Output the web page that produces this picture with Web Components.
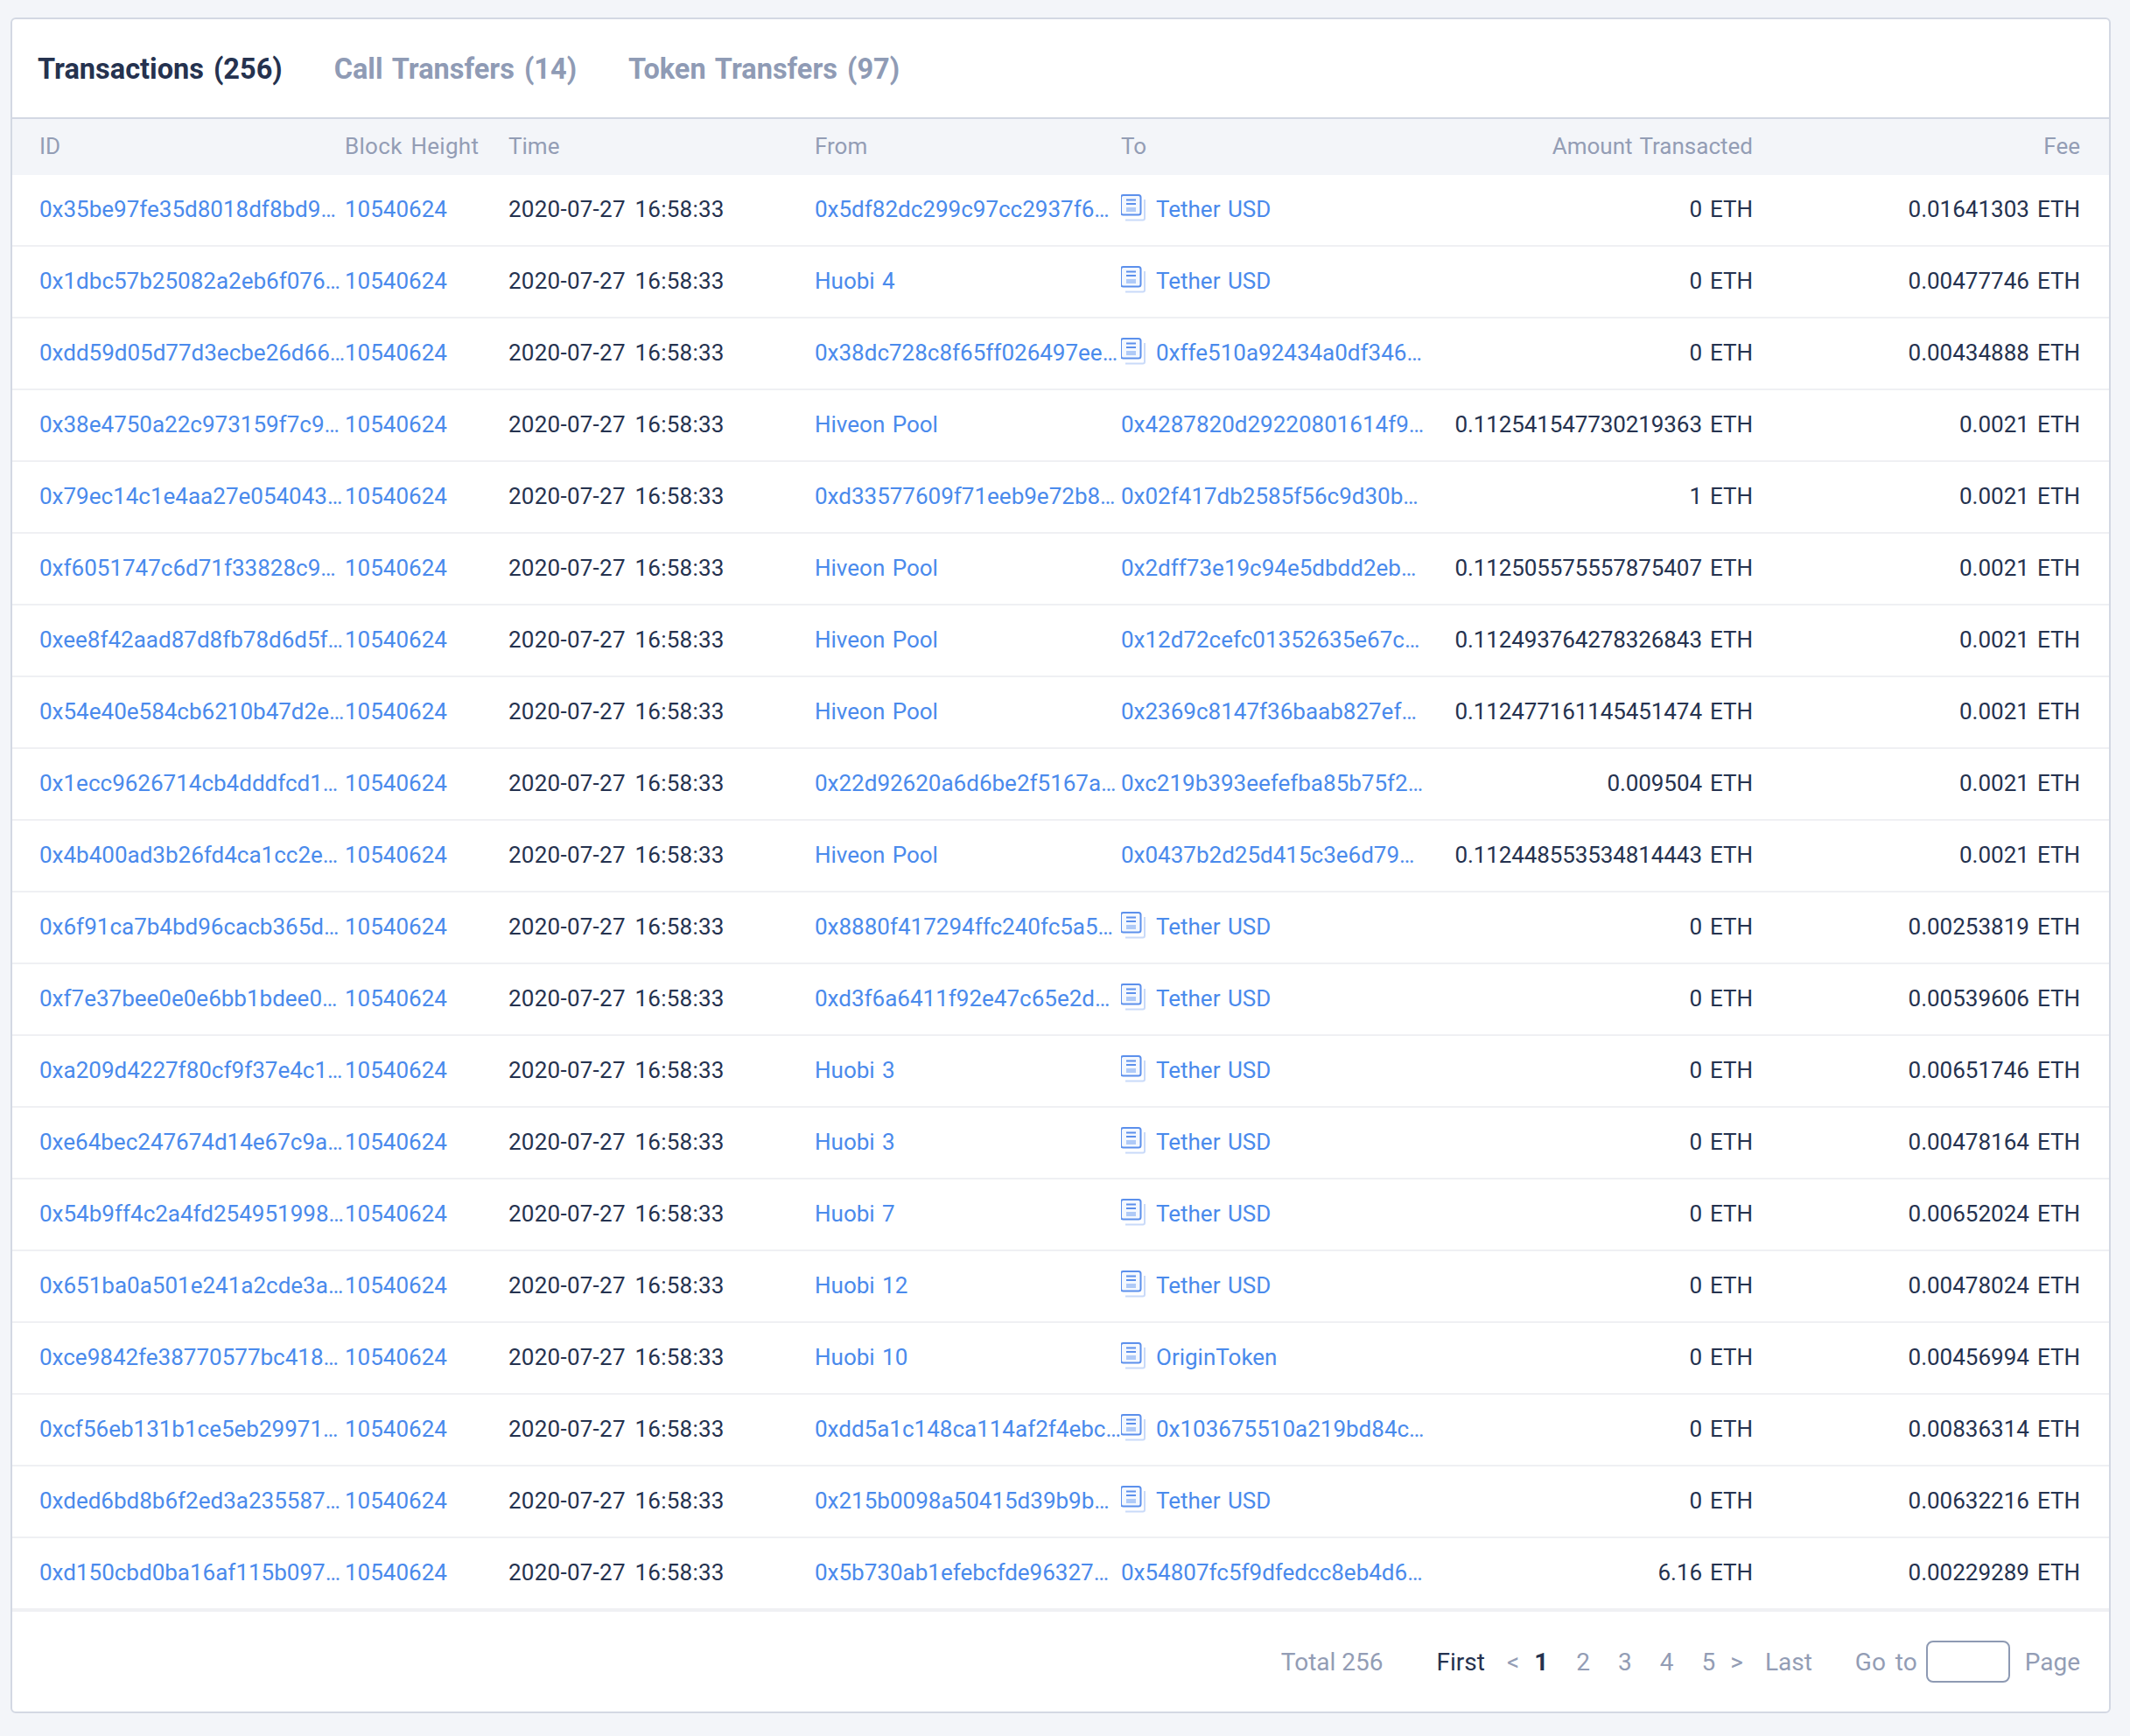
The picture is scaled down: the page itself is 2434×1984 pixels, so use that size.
<!DOCTYPE html>
<html>
<head>
<meta charset="utf-8">
<title>Transactions</title>
<style>
  html, body { margin: 0; background: #f3f5f9; }
</style>
</head>
<body>
<tx-card>
  <tx-tabs slot="tabs">
    <tx-tab active>Transactions (256)</tx-tab>
    <tx-tab>Call Transfers (14)</tx-tab>
    <tx-tab>Token Transfers (97)</tx-tab>
  </tx-tabs>
  <tx-head slot="head"></tx-head>
  <div slot="rows" id="rows"></div>
  <tx-pager slot="pager" total="256"></tx-pager>
</tx-card>

<script>
const COLUMNS = '380px 187px 350px 350px 350px 372px 407px';

class TxCard extends HTMLElement {
  constructor() {
    super();
    this.attachShadow({ mode: 'open' });
    this.shadowRoot.innerHTML = `
      <style>
        :host {
          display: block;
          margin: 20px 22px 0 12px;
          background: #fff;
          border: 2px solid #d3d8e3;
          border-radius: 6px;
          overflow: hidden;
          font-family: Roboto, "Noto Sans", sans-serif;
          font-size: 26px;
          color: #25324f;
        }
      </style>
      <slot name="tabs"></slot>
      <slot name="head"></slot>
      <slot name="rows"></slot>
      <slot name="pager"></slot>
    `;
  }
}

class TxTabs extends HTMLElement {
  constructor() {
    super();
    this.attachShadow({ mode: 'open' });
    this.shadowRoot.innerHTML = `
      <style>
        :host {
          display: flex;
          box-sizing: border-box;
          height: 114px;
          padding: 2px 0 0 29px;
          gap: 59px;
          align-items: center;
          border-bottom: 2px solid #d3d8e3;
        }
      </style>
      <slot></slot>
    `;
  }
}

class TxTab extends HTMLElement {
  constructor() {
    super();
    this.attachShadow({ mode: 'open' });
    this.shadowRoot.innerHTML = `
      <style>
        :host {
          display: block;
          font-size: 32.500px;
          font-weight: 700;
          word-spacing: 3px;
          color: #8f9bb5;
        }
        :host([active]) { color: #25324f; }
      </style>
      <slot></slot>
    `;
  }
}

class TxHead extends HTMLElement {
  constructor() {
    super();
    this.attachShadow({ mode: 'open' });
    const labels = ['ID', 'Block Height', 'Time', 'From', 'To', 'Amount Transacted', 'Fee'];
    this.shadowRoot.innerHTML = `
      <style>
        :host {
          display: grid;
          grid-template-columns: ${COLUMNS};
          box-sizing: border-box;
          height: 64px;
          padding-bottom: 2px;
          align-items: center;
          background: #f3f5f9;
          color: #939db5;
          word-spacing: 2px;
        }
        .c0 { padding-left: 31px; }
        .c1 { word-spacing: 3px; letter-spacing: .3px; }
        .c5 { text-align: right; }
        .c6 { text-align: right; padding-right: 33px; }
      </style>
      ${labels.map((l, i) => `<div class="c${i}">${l}</div>`).join('')}
    `;
  }
}

class TxRow extends HTMLElement {
  constructor() {
    super();
    this.attachShadow({ mode: 'open' });
  }

  connectedCallback() {
    const a = (n) => this.getAttribute(n) || '';
    const icon = this.hasAttribute('contract') ? `
      <svg width="30" height="31" viewBox="0 0 30 31">
        <path d="M28 6V27.500a2 2 0 0 1-2 2H6" fill="none" stroke="#c9daf9" stroke-width="2"/>
        <rect x="1" y="1" width="22.500" height="22.500" rx="2.500" fill="#f4f8fe" stroke="#5c90ec" stroke-width="2"/>
        <path d="M7 6.500H18M7 11H18" stroke="#5c90ec" stroke-width="2"/>
        <rect x="7" y="15" width="11" height="5" fill="#afcaf7"/>
      </svg>` : '';
    this.shadowRoot.innerHTML = `
      <style>
        :host {
          display: grid;
          grid-template-columns: ${COLUMNS};
          box-sizing: border-box;
          height: 82px;
          padding-bottom: 2px;
          align-items: center;
          border-bottom: 2px solid #eff0f3;
          white-space: nowrap;
          word-spacing: 2px;
        }
        a { color: #4a8aec; text-decoration: none; }
        .cell { overflow: hidden; }
        .id { padding-left: 31px; }
        .time { word-spacing: 4px; letter-spacing: .25px; }
        .to { display: flex; align-items: center; }
        svg { flex: none; margin: 0 11px 3px -1px; }
        .num { text-align: right; }
        .amount { letter-spacing: -.1px; }
        .fee { padding-right: 33px; }
        .unit { margin-left: 9px; letter-spacing: 0; }
      </style>
      <div class="cell id"><a href="#">${a('tx')}</a></div>
      <div class="cell"><a href="#">${a('block')}</a></div>
      <div class="cell time">${a('time')}</div>
      <div class="cell"><a href="#">${a('from')}</a></div>
      <div class="cell to">${icon}<a href="#">${a('to')}</a></div>
      <div class="cell num amount">${a('amount')}<span class="unit">ETH</span></div>
      <div class="cell num fee">${a('fee')}<span class="unit">ETH</span></div>
    `;
  }
}

class TxPager extends HTMLElement {
  constructor() {
    super();
    this.attachShadow({ mode: 'open' });
    this.shadowRoot.innerHTML = `
      <style>
        :host {
          display: flex;
          box-sizing: border-box;
          height: 116px;
          padding: 0 33px 0 0;
          align-items: center;
          justify-content: flex-end;
          border-top: 2px solid #eff0f3;
          color: #939db5;
          font-size: 28px;
        }
        .first { margin-left: 61px; color: #25324f; }
        .prev { margin-left: 25px; }
        .cur { margin-left: 17px; color: #25324f; font-weight: 700; }
        .num { margin-left: 32px; }
        .next { margin-left: 17px; }
        .last { margin-left: 25px; }
        .goto { margin-left: 49px; word-spacing: 4px; }
        .box {
          box-sizing: border-box;
          width: 96px;
          height: 48px;
          margin: 0 17px 0 10px;
          border: 2px solid #8e9ab3;
          border-radius: 8px;
        }
      </style>
      <span>Total ${this.getAttribute('total')}</span>
      <span class="first">First</span>
      <span class="prev">&lt;</span>
      <span class="cur">1</span>
      <span class="num">2</span>
      <span class="num">3</span>
      <span class="num">4</span>
      <span class="num">5</span>
      <span class="next">&gt;</span>
      <span class="last">Last</span>
      <span class="goto">Go to</span>
      <div class="box"></div>
      <span>Page</span>
    `;
  }
}

customElements.define('tx-card', TxCard);
customElements.define('tx-tabs', TxTabs);
customElements.define('tx-tab', TxTab);
customElements.define('tx-head', TxHead);
customElements.define('tx-row', TxRow);
customElements.define('tx-pager', TxPager);

// tx, from, to, contract?, amount, fee
const data = [
  ['0x35be97fe35d8018df8bd9…', '0x5df82dc299c97cc2937f6…', 'Tether USD', 1, '0', '0.01641303'],
  ['0x1dbc57b25082a2eb6f076…', 'Huobi 4', 'Tether USD', 1, '0', '0.00477746'],
  ['0xdd59d05d77d3ecbe26d66…', '0x38dc728c8f65ff026497ee…', '0xffe510a92434a0df346…', 1, '0', '0.00434888'],
  ['0x38e4750a22c973159f7c9…', 'Hiveon Pool', '0x4287820d29220801614f9…', 0, '0.112541547730219363', '0.0021'],
  ['0x79ec14c1e4aa27e054043…', '0xd33577609f71eeb9e72b8…', '0x02f417db2585f56c9d30b…', 0, '1', '0.0021'],
  ['0xf6051747c6d71f33828c9…', 'Hiveon Pool', '0x2dff73e19c94e5dbdd2eb…', 0, '0.112505575557875407', '0.0021'],
  ['0xee8f42aad87d8fb78d6d5f…', 'Hiveon Pool', '0x12d72cefc01352635e67c…', 0, '0.112493764278326843', '0.0021'],
  ['0x54e40e584cb6210b47d2e…', 'Hiveon Pool', '0x2369c8147f36baab827ef…', 0, '0.112477161145451474', '0.0021'],
  ['0x1ecc9626714cb4dddfcd1…', '0x22d92620a6d6be2f5167a…', '0xc219b393eefefba85b75f2…', 0, '0.009504', '0.0021'],
  ['0x4b400ad3b26fd4ca1cc2e…', 'Hiveon Pool', '0x0437b2d25d415c3e6d79…', 0, '0.112448553534814443', '0.0021'],
  ['0x6f91ca7b4bd96cacb365d…', '0x8880f417294ffc240fc5a5…', 'Tether USD', 1, '0', '0.00253819'],
  ['0xf7e37bee0e0e6bb1bdee0…', '0xd3f6a6411f92e47c65e2d…', 'Tether USD', 1, '0', '0.00539606'],
  ['0xa209d4227f80cf9f37e4c1…', 'Huobi 3', 'Tether USD', 1, '0', '0.00651746'],
  ['0xe64bec247674d14e67c9a…', 'Huobi 3', 'Tether USD', 1, '0', '0.00478164'],
  ['0x54b9ff4c2a4fd254951998…', 'Huobi 7', 'Tether USD', 1, '0', '0.00652024'],
  ['0x651ba0a501e241a2cde3a…', 'Huobi 12', 'Tether USD', 1, '0', '0.00478024'],
  ['0xce9842fe38770577bc418…', 'Huobi 10', 'OriginToken', 1, '0', '0.00456994'],
  ['0xcf56eb131b1ce5eb29971…', '0xdd5a1c148ca114af2f4ebc…', '0x103675510a219bd84c…', 1, '0', '0.00836314'],
  ['0xded6bd8b6f2ed3a235587…', '0x215b0098a50415d39b9b…', 'Tether USD', 1, '0', '0.00632216'],
  ['0xd150cbd0ba16af115b097…', '0x5b730ab1efebcfde96327…', '0x54807fc5f9dfedcc8eb4d6…', 0, '6.16', '0.00229289'],
];

const rows = document.getElementById('rows');
data.forEach(([tx, from, to, contract, amount, fee]) => {
  const row = document.createElement('tx-row');
  row.setAttribute('tx', tx);
  row.setAttribute('block', '10540624');
  row.setAttribute('time', '2020-07-27 16:58:33');
  row.setAttribute('from', from);
  row.setAttribute('to', to);
  if (contract) row.setAttribute('contract', '');
  row.setAttribute('amount', amount);
  row.setAttribute('fee', fee);
  rows.appendChild(row);
});
</script>
</body>
</html>
